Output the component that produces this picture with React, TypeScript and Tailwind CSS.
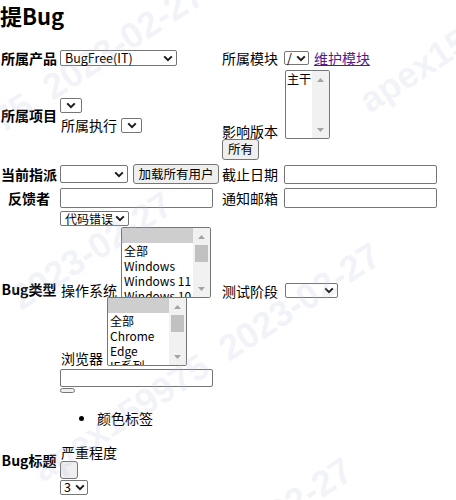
import React from 'react';

const Chevron = () => (
  <svg width="10" height="7" viewBox="0 0 10 7" className="shrink-0">
    <path d="M1.2 1.4 L5 5.2 L8.8 1.4" fill="none" stroke="#1b1b1b" strokeWidth="2" />
  </svg>
);

function Select({ className = '', text }: { className?: string; text?: string }) {
  return (
    <div
      className={`flex items-center ${text ? 'justify-between pl-[4px] pr-[3px]' : 'justify-end pr-[3px]'} border border-[#767676] rounded-[2px] bg-white text-[12.5px] leading-none whitespace-nowrap ${className}`}
    >
      {text && <span>{text}</span>}
      <Chevron />
    </div>
  );
}

function Button({ className = '', children }: { className?: string; children?: React.ReactNode }) {
  return (
    <button
      type="button"
      className={`flex items-center justify-center border border-[#767676] rounded-[3px] bg-[#efefef] text-[12.5px] leading-none ${className}`}
    >
      {children}
    </button>
  );
}

function Input({ className = '' }: { className?: string }) {
  return <input className={`border border-[#767676] rounded-[2px] bg-white ${className}`} />;
}

const Tri = ({ up }: { up?: boolean }) => (
  <svg width="7" height="4" viewBox="0 0 7 4">
    <polygon points={up ? '0,4 3.5,0 7,4' : '0,0 3.5,4 7,0'} fill="#a3a3a3" />
  </svg>
);

function ListBox({
  className = '',
  items,
  selectedFirst,
  thumb,
  tight,
}: {
  className?: string;
  items: string[];
  selectedFirst?: boolean;
  thumb?: boolean;
  tight?: boolean;
}) {
  return (
    <div className={`flex overflow-hidden border border-[#767676] rounded-[2px] bg-white ${className}`}>
      <div className="flex-1 overflow-hidden text-[12px] leading-[15px]">
        {items.map((it, i) => (
          <div
            key={i}
            className={`h-[15px] ${tight ? 'pl-[1px]' : 'pl-[2px]'} whitespace-nowrap ${i === 0 && selectedFirst ? 'bg-[#cecece]' : ''}`}
          >
            {it}
          </div>
        ))}
      </div>
      <div className="flex w-[17px] shrink-0 flex-col bg-[#f1f1f1]">
        <div className="flex h-[17px] items-center justify-center">
          <Tri up />
        </div>
        <div className="flex-1">{thumb && <div className="mx-[2px] h-[17px] bg-[#c1c1c1]" />}</div>
        <div className="flex h-[17px] items-center justify-center">
          <Tri />
        </div>
      </div>
    </div>
  );
}

// faint diagonal user/date watermark laid over the form
const Mark = ({ className }: { className: string }) => (
  <div
    className={`pointer-events-none absolute origin-left -rotate-[33deg] whitespace-nowrap font-['Liberation_Sans',sans-serif] text-[36px] font-bold leading-[36px] text-[rgba(190,195,220,0.2)] ${className}`}
  >
    apex159975<span className="ml-[20px]">2023-02-27</span>
  </div>
);

export default function App() {
  const row = 'grid grid-cols-[58px_160px_1fr] gap-x-[2px]';
  return (
    <div className="relative h-[500px] w-[456px] overflow-hidden bg-white font-['Noto_Sans_CJK_SC',sans-serif] text-[14px] text-black">
      <h2 className="h-[48px] text-[22px] font-bold leading-[30px]">提Bug</h2>

      <div className={`${row} h-[20px]`}>
        <div className="flex items-center justify-center font-bold leading-none">所属产品</div>
        <div className="flex items-center">
          <Select className="h-[16px] w-[117px]" text="BugFree(IT)" />
        </div>
        <div className="flex items-center leading-none">
          <span>所属模块</span>
          <Select className="ml-[6px] h-[14px] w-[25px] !pl-[2px] !pr-[2px]" text="/" />
          <a href="#" className="ml-[5px] text-[#551a8b] underline">
            维护模块
          </a>
        </div>
      </div>

      <div className={`${row} h-[94px]`}>
        <div className="flex items-center justify-center font-bold leading-none">所属项目</div>
        <div className="flex flex-col justify-center">
          <Select className="h-[15px] w-[22px] !justify-center !pr-0" />
          <div className="mt-[5px] flex h-[15px] items-center leading-none">
            <span className="ml-[1px]">所属执行</span>
            <Select className="ml-[4px] h-[15px] w-[21px] !justify-center !pr-0" />
          </div>
        </div>
        <div className="flex flex-col items-start justify-center">
          <div className="flex items-end">
            <span className="leading-[16px]">影响版本</span>
            <ListBox className="ml-[7px] h-[69px] w-[45px]" items={['主干']} tight />
          </div>
          <Button className="h-[21px] w-[37px]">所有</Button>
        </div>
      </div>

      <div className={`${row} h-[24px]`}>
        <div className="flex items-center justify-center font-bold leading-none">当前指派</div>
        <div className="flex items-center">
          <Select className="h-[18px] w-[68px]" />
          <Button className="ml-[5px] h-[20px] w-[86px]">加载所有用户</Button>
        </div>
        <div className="flex items-center leading-none">
          <span>截止日期</span>
          <Input className="ml-[6px] h-[19px] w-[153px]" />
        </div>
      </div>

      <div className={`${row} h-[24px]`}>
        <div className="flex items-center justify-center font-bold leading-none">反馈者</div>
        <div className="flex items-center">
          <Input className="h-[20px] w-[153px]" />
        </div>
        <div className="flex items-center leading-none">
          <span>通知邮箱</span>
          <Input className="ml-[6px] h-[20px] w-[153px]" />
        </div>
      </div>

      <div className={row}>
        <div className="mt-[71px] self-start text-center font-bold leading-[16px]">Bug类型</div>
        <div className="flex flex-col items-start">
          <Select className="mt-[1px] h-[15px] w-[69px] text-[12px]" text="代码错误" />
          <div className="mt-[1px] flex items-end">
            <span className="ml-[1px] leading-[16px]">操作系统</span>
            <ListBox
              className="ml-[4px] h-[71px] w-[90px]"
              items={['', '全部', 'Windows', 'Windows 11', 'Windows 10']}
              selectedFirst
              thumb
            />
          </div>
          <div className="mt-[-1px] flex items-end">
            <span className="ml-[1px] leading-[16px]">浏览器</span>
            <ListBox
              className="ml-[4px] h-[69px] w-[80px]"
              items={['', '全部', 'Chrome', 'Edge', 'IE系列']}
              selectedFirst
              thumb
            />
          </div>
          <Input className="mt-[3px] h-[18px] w-[153px]" />
          <div className="mt-[1px] h-[5px] w-[15px] rounded-[3px] border border-[#767676] bg-[#efefef]" />
        </div>
        <div className="mt-[73px] flex h-[15px] items-center self-start leading-none">
          <span>测试阶段</span>
          <Select className="ml-[7px] h-[15px] w-[53px]" />
        </div>
      </div>

      <div className="flex h-[50px] items-center">
        <span className="ml-[79px] h-[5px] w-[5px] rounded-full bg-black" />
        <span className="ml-[13px] leading-none">颜色标签</span>
      </div>

      <div className={row}>
        <div className="mt-[9px] self-start text-center font-bold leading-[16px]">Bug标题</div>
        <div className="flex flex-col items-start">
          <span className="ml-[1px] leading-[18px]">严重程度</span>
          <Button className="h-[18px] w-[18px]" />
          <Select className="mt-[1px] h-[15px] w-[28px] !pl-[3px] !pr-[2px]" text="3" />
        </div>
        <div />
      </div>

      <Mark className="left-[-140px] top-[194px]" />
      <Mark className="left-[363px] top-[86px]" />
      <Mark className="left-[-172px] top-[404px]" />
      <Mark className="left-[36px] top-[455px]" />
      <Mark className="left-[8px] top-[670px]" />
    </div>
  );
}
